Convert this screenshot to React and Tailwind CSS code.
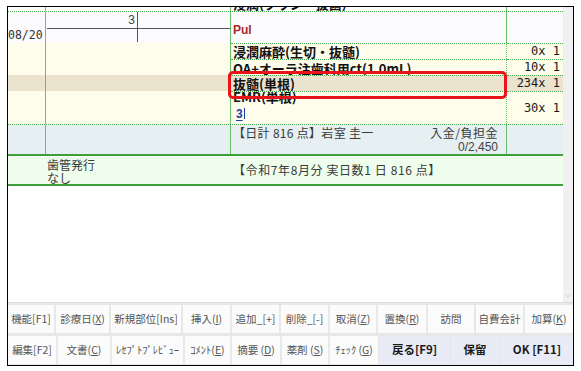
import { ChevronDown } from "lucide-react";

const jp = "font-['Noto_Sans_CJK_JP','Noto_Sans',sans-serif]";
const mono = "font-['DejaVu_Sans_Mono','Liberation_Mono',monospace]";
const clip = "overflow-hidden [clip-path:inset(0)]";

const row1Buttons = [
  { w: "w-[46px]", label: "機能[F1]" },
  { w: "w-[53px]", label: "診療日(", key: "X", tail: ")" },
  { w: "w-[70px]", label: "新規部位[Ins]" },
  { w: "w-[47px]", label: "挿入(", key: "I", tail: ")" },
  { w: "w-[47px]", label: "追加_[+]" },
  { w: "w-[47px]", label: "削除_[-]" },
  { w: "w-[46px]", label: "取消(", key: "Z", tail: ")" },
  { w: "w-[48px]", label: "置換(", key: "R", tail: ")" },
  { w: "w-[46px]", label: "訪問" },
  { w: "w-[47px]", label: "自費会計" },
  { w: "flex-1", label: "加算(", key: "K", tail: ")" },
];

const row2Buttons = [
  { w: "w-[48px]", label: "編集[F2]" },
  { w: "w-[52px]", label: "文書(", key: "C", tail: ")" },
  { w: "w-[71px]", label: "ﾚｾﾌﾟﾄﾌﾟﾚﾋﾞｭｰ" },
  { w: "w-[45px]", label: "ｺﾒﾝﾄ(", key: "E", tail: ")" },
  { w: "w-[48px]", label: "摘要 (", key: "D", tail: ")" },
  { w: "w-[46px]", label: "薬剤 (", key: "S", tail: ")" },
  { w: "w-[48px]", label: "ﾁｪｯｸ (", key: "G", tail: ")" },
  { w: "w-[69px]", label: "戻る[F9]", bold: true },
  { w: "w-[48px]", label: "保留", bold: true },
  { w: "flex-1", label: "OK [F11]", bold: true },
];

const Btn = ({ b }) => (
  <div
    className={`${b.w} h-full flex items-center justify-center whitespace-nowrap ${
      b.bold
        ? "bg-[#e9ecf6] text-[#1a1a1a] font-bold text-[11.5px]"
        : "bg-[#fbfbfb] text-[#555] text-[10.5px]"
    }`}
  >
    {b.label}
    {b.key && <u>{b.key}</u>}
    {b.tail}
  </div>
);

// col cells: col1 38, col2 185, col3 276, col4 rest
const C1 = ({ children, className = "" }) => (
  <div className={`w-[38px] h-full border-r border-[#6cbf6a] ${className}`}>{children}</div>
);
const C2 = ({ children, className = "" }) => (
  <div className={`w-[185px] h-full border-r border-[#6cbf6a] ${className}`}>{children}</div>
);
const C3 = ({ children, className = "" }) => (
  <div className={`w-[276px] h-full border-r border-[#6cbf6a] pl-[2px] ${className}`}>{children}</div>
);
const C4 = ({ children, className = "" }) => (
  <div className={`flex-1 h-full pr-[3px] text-right ${className}`}>{children}</div>
);

const dot = "border-t border-dotted border-t-[#4caf50]";
const amt = `${mono} text-[12px] leading-[15px] text-[#1a1a1a]`;
const itemName = "font-bold text-[13px] leading-[15px] text-[#111] whitespace-nowrap";

const ItemRow = ({ h, bg, name, amount, nameClass = "" }) => (
  <div className={`flex ${h} ${bg}`}>
    <C1 />
    <C2 />
    <C3 className={dot}>
      <div className={`h-full ${clip}`}>
        <div className={`${itemName} ${nameClass}`}>{name}</div>
      </div>
    </C3>
    <C4 className={`${dot} ${amt}`}>{amount}</C4>
  </div>
);

export default function App() {
  return (
    <div className={`w-[581px] h-[371px] bg-white pt-[6px] pl-[7px] ${jp}`}>
      <div className="w-[567px] h-[360px] border border-black flex flex-col relative">
        <div className="flex h-[295px]">
          <div className="w-[555px] flex flex-col">
            {/* row scrolled mostly out of view */}
            <div className="flex h-[5px] shrink-0 border-b border-dotted border-b-[#4caf50]">
              <C1 />
              <C2 />
              <C3>
                <div className={`h-full ${clip}`}>
                  <div className={`${itemName} mt-[-11px]`}>浸潤(ブラシ・抜歯)</div>
                </div>
              </C3>
              <C4 className={amt}>
                <div className={`h-full ${clip}`}>
                  <div className="mt-[-11px]">30x 1</div>
                </div>
              </C4>
            </div>

            {/* tooth row */}
            <div className="flex h-[31px] shrink-0 bg-[#fbfafd]">
              <C1 className="flex items-end">
                <span className={`${mono} text-[11.5px] leading-[15px] text-[#333]`}>08/20</span>
              </C1>
              <C2 className="pl-[1px]">
                <div className="grid grid-cols-[91px_1fr] grid-rows-[17px_13px] h-full">
                  <div className="border-r border-b border-[#555] flex justify-end items-center pr-[2px]">
                    <span className="text-[12px] leading-[12px] text-[#444] font-['Liberation_Sans',sans-serif]">3</span>
                  </div>
                  <div className="border-b border-[#555]" />
                  <div className="border-r border-[#555]" />
                  <div />
                </div>
              </C2>
              <C3 className="flex items-center pt-[4px]">
                <span className="font-['Liberation_Sans',sans-serif] font-bold text-[12px] text-[#a52a2a]">Pul</span>
              </C3>
              <C4 />
            </div>

            <ItemRow h="h-[16px]" bg="bg-[#fefcea]" name="浸潤麻酔(生切・抜髄)" amount="0x 1" />
            <ItemRow h="h-[16px]" bg="bg-[#fefcea]" name="OA+オーラ注歯科用ct(1.0mL)" amount="10x 1" nameClass="mt-[1px]" />
            <ItemRow h="h-[16px]" bg="bg-[#ebe3cd]" name="抜髄(単根)" amount="234x 1" />
            <div className="flex h-[33px] shrink-0 bg-[#fefcea]">
              <C1 />
              <C2 />
              <C3 className={dot}>
                <div className={`h-[14px] ${clip}`}>
                  <div className={`${itemName} mt-[-3px]`}>EMR(単根)</div>
                </div>
                <div className="flex items-center h-[15px] pl-[3px] text-[#1d3fa8] font-bold text-[12px] font-['Liberation_Sans',sans-serif]">
                  <span className="underline underline-offset-2">3</span>
                  <span className="w-[1px] h-[11px] bg-[#1d3fa8] ml-[1px]" />
                </div>
              </C3>
              <C4 className={`${dot} ${amt} pt-[9px]`}>30x 1</C4>
            </div>

            {/* daily total */}
            <div className="flex h-[30px] shrink-0 bg-[#e6eff2] border-t border-dotted border-t-[#4caf50] text-[12px] leading-[14px] text-[#3a3a3a]">
              <C1 />
              <C2 />
              <C3 className="flex flex-col pt-[1px] pr-[8px]">
                <div className="flex justify-between">
                  <span className="tracking-[0.3px]">【日計 816 点】岩室 圭一</span>
                  <span className="tracking-[0.5px]">入金/負担金</span>
                </div>
                <div className="text-right font-['Liberation_Sans',sans-serif] text-[12px] leading-[15px] text-[#444]">0/2,450</div>
              </C3>
              <C4 />
            </div>

            {/* monthly total */}
            <div className="flex h-[32px] shrink-0 bg-[#eefdec] border-y-2 border-[#3f9f3d] text-[12px] leading-[13px] text-[#3a3a3a]">
              <div className="w-[38px]" />
              <div className="w-[186px] flex flex-col pt-[2px] pl-[1px]">
                <span>歯管発行</span>
                <span>なし</span>
              </div>
              <div className="flex-1 flex items-center pl-[1px] pb-[1px] tracking-[0.6px]">【令和7年8月分 実日数1 日 816 点】</div>
            </div>
            <div className="flex-1 bg-white" />
          </div>
          <div className="flex-1 bg-[#f0f0f0] flex flex-col justify-end items-center pb-[2px]">
            <ChevronDown size={8} color="#aaaaaa" strokeWidth={1.5} />
          </div>
        </div>

        {/* function buttons */}
        <div className="flex-1 border-t border-[#dcdcdc] bg-[#e8e8e8] pt-[2px] flex flex-col gap-[3px]">
          <div className="flex h-[28px] gap-[2px]">
            {row1Buttons.map((b, i) => (
              <Btn key={i} b={b} />
            ))}
          </div>
          <div className="flex h-[28px] gap-[2px]">
            {row2Buttons.map((b, i) => (
              <Btn key={i} b={b} />
            ))}
          </div>
        </div>

        {/* selection highlight */}
        <div className="absolute left-[220px] top-[64px] w-[279px] h-[28px] border-[3px] border-[#e8141a] rounded-[5px]" />
      </div>
    </div>
  );
}
